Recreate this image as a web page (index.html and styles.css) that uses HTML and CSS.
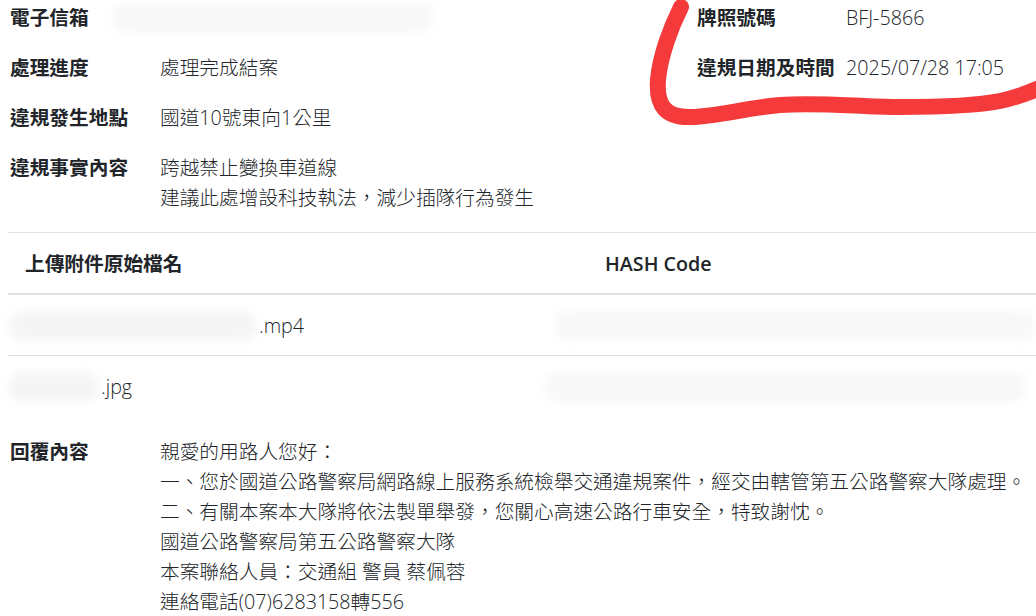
FILE: index.html
```html
<!DOCTYPE html>
<html lang="zh-Hant">
<head>
    <meta charset="UTF-8">
    <title>檢舉案件查詢</title>
    <link rel="stylesheet" href="styles.css">
</head>
<body>
    <div class="page">
        <div class="info">
            <div class="info-col">
                <div class="field">
                    <div class="label">電子信箱</div>
                    <div class="value"><span class="smudge smudge-email"></span></div>
                </div>
                <div class="field">
                    <div class="label">處理進度</div>
                    <div class="value">處理完成結案</div>
                </div>
                <div class="field">
                    <div class="label">違規發生地點</div>
                    <div class="value">國道10號東向1公里</div>
                </div>
                <div class="field">
                    <div class="label">違規事實內容</div>
                    <div class="value">跨越禁止變換車道線<br>建議此處增設科技執法，減少插隊行為發生</div>
                </div>
            </div>
            <div class="info-col info-col-right">
                <div class="field">
                    <div class="label">牌照號碼</div>
                    <div class="value">BFJ-5866</div>
                </div>
                <div class="field">
                    <div class="label">違規日期及時間</div>
                    <div class="value">2025/07/28 17:05</div>
                </div>
            </div>
        </div>

        <table class="files">
            <thead>
                <tr>
                    <th class="col-name">上傳附件原始檔名</th>
                    <th>HASH Code</th>
                </tr>
            </thead>
            <tbody>
                <tr>
                    <td><span class="smudge smudge-file-long"></span>.mp4</td>
                    <td><span class="smudge smudge-hash"></span></td>
                </tr>
                <tr class="last">
                    <td><span class="smudge smudge-file-short"></span>.jpg</td>
                    <td><span class="smudge smudge-hash smudge-hash-low"></span></td>
                </tr>
            </tbody>
        </table>

        <div class="field reply">
            <div class="label">回覆內容</div>
            <div class="value">
                親愛的用路人您好：<br>
                一、您於國道公路警察局網路線上服務系統檢舉交通違規案件，經交由轄管第五公路警察大隊處理。<br>
                二、有關本案本大隊將依法製單舉發，您關心高速公路行車安全，特致謝忱。<br>
                國道公路警察局第五公路警察大隊<br>
                本案聯絡人員：交通組 警員 蔡佩蓉<br>
                連絡電話(07)6283158轉556
            </div>
        </div>

        <!-- hand-drawn marker stroke on top of the screenshot -->
        <svg class="mark" width="1036" height="140" viewBox="0 0 1036 140">
            <path d="M681,7 C672,25 660,55 658,80 C656,106 666,118 691,117 C720,116 745,108 780,105 C820,102 860,107 900,107 C950,107 980,105 1000,101 C1015,98 1028,93 1042,87"
                  fill="none" stroke="#f43a3a" stroke-width="16" stroke-linecap="round" stroke-linejoin="round"/>
        </svg>
    </div>
</body>
</html>
```

FILE: styles.css
```css
body {
    margin: 0;
    background: #fff;
    color: #212529;
    font-family: "Open Sans", "Noto Sans CJK TC", sans-serif;
    font-size: 19.7px;
    line-height: 30px;
    overflow: hidden;
}
.page {
    position: relative;
    padding: 3px 0 0 8px;
}
.info {
    display: flex;
    margin-left: 2px;
}
.info-col {
    flex: 0 0 687px;
}
.info-col-right {
    flex: 1;
}
.field {
    display: flex;
    margin-bottom: 20px;
}
.field .label,
.field .value {
    line-height: 30px;
}
.label {
    flex: 0 0 150px;
    font-weight: 700;
}
.info-col-right .label {
    flex-basis: 149px;
}
.value {
    white-space: nowrap;
    min-height: 30px;
    font-weight: 300;
}
.smudge {
    display: inline-block;
    vertical-align: top;
    height: 30px;
    background: #f5f5f5;
    border-radius: 12px;
    filter: blur(4px);
}
.smudge-email {
    width: 320px;
    margin-left: -47px;
    background: #f8f8f8;
}
.files {
    width: 1028px;
    table-layout: fixed;
    border-collapse: collapse;
    margin-top: -1px;
}
.files th,
.files td {
    text-align: left;
    padding: 16px 17px 14px;
    line-height: 30px;
    height: 30px;
    white-space: nowrap;
}
.files th {
    font-weight: 600;
    border-top: 1px solid #dee2e6;
    border-bottom: 2px solid #dee2e6;
}
.files .col-name {
    width: 546px;
}
.files td {
    font-weight: 300;
    border-bottom: 1px solid #dee2e6;
}
.files tr.last td {
    border-bottom: none;
}
.smudge-file-long {
    width: 246px;
    margin-left: -15px;
    margin-right: 3px;
}
.smudge-file-short {
    width: 88px;
    margin-left: -15px;
    margin-right: 3px;
}
.smudge-hash {
    width: 480px;
    margin-left: -50px;
    background: #f8f8f8;
}
.smudge-hash-low {
    margin-left: -60px;
}
.reply {
    margin: 21px 0 0 2px;
}
.mark {
    position: absolute;
    top: 0;
    left: 0;
    pointer-events: none;
}
```
